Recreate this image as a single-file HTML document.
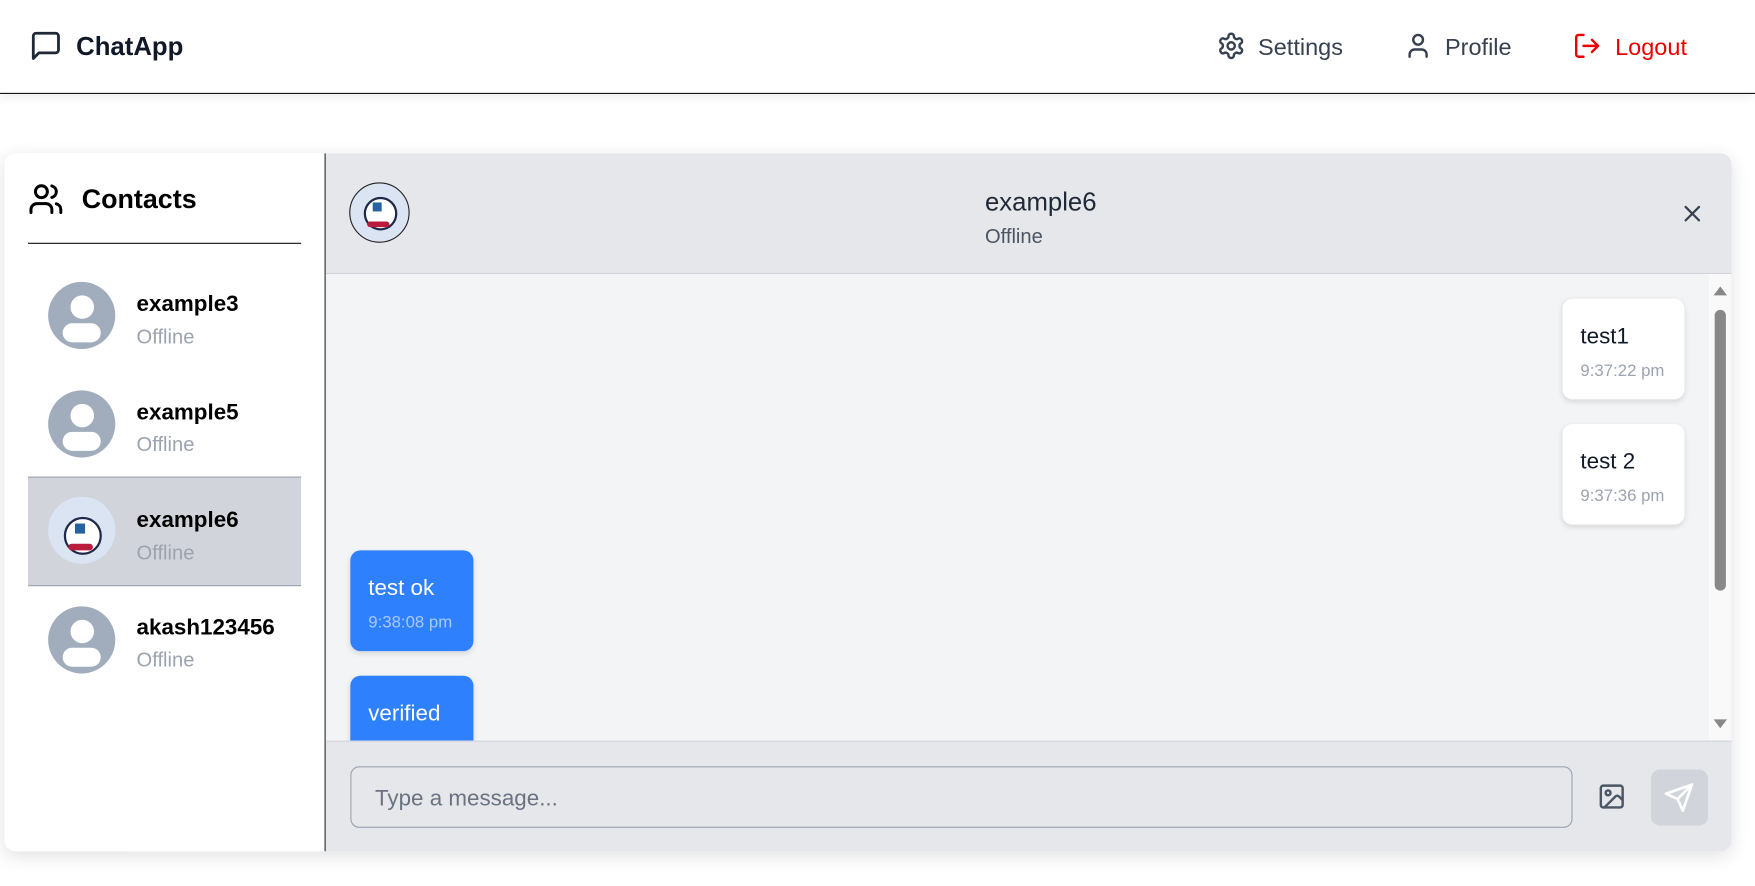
<!DOCTYPE html>
<html><head><meta charset="utf-8"><style>
html,body{margin:0;padding:0;width:1755px;height:886px;overflow:hidden;background:#fff;font-family:"Liberation Sans",sans-serif;}
#w{position:absolute;left:0;top:0;width:1568px;height:792px;transform:scale(1.11926,1.1187);transform-origin:0 0;}
.a{position:absolute;}
.nav{left:0;top:0;width:1568px;height:83px;border-bottom:1px solid #111;background:#fff;box-shadow:0 4px 8px rgba(0,0,0,0.06);}
.navt{font-size:21px;color:#374151;}
.card{left:4px;top:137px;width:1543px;height:624px;border-radius:10px;box-shadow:0 4px 16px rgba(0,0,0,0.12);overflow:hidden;background:#fff;}
.name{font-size:20px;font-weight:bold;color:#000;}
.off{font-size:18px;color:#9ca3af;}
.av{width:60px;height:60px;border-radius:50%;background:#a1adbd;overflow:hidden;}
.bw{background:#fff;border-radius:9px;box-shadow:0 2px 5px rgba(0,0,0,0.12);}
.bb{background:#2f80fc;border-radius:9px;box-shadow:0 2px 5px rgba(0,0,0,0.12);}
</style></head><body><div id="w">
<div class="a nav">
 <svg class="a" style="left:26px;top:26px" width="30" height="30" viewBox="0 0 24 24" fill="none" stroke="#1f2937" stroke-width="2" stroke-linecap="round" stroke-linejoin="round"><path d="M21 15a2 2 0 0 1-2 2H7l-4 4V5a2 2 0 0 1 2-2h14a2 2 0 0 1 2 2z"/></svg>
 <div class="a" style="left:68px;top:28px;font-size:23px;font-weight:bold;color:#111827">ChatApp</div>
 <svg class="a" style="left:1087px;top:28px" width="26" height="26" viewBox="0 0 24 24" fill="none" stroke="#374151" stroke-width="2" stroke-linecap="round" stroke-linejoin="round"><path d="M12.22 2h-.44a2 2 0 0 0-2 2v.18a2 2 0 0 1-1 1.73l-.43.25a2 2 0 0 1-2 0l-.15-.08a2 2 0 0 0-2.730.73l-.22.38a2 2 0 0 0 .73 2.73l.15.1a2 2 0 0 1 1 1.72v.51a2 2 0 0 1-1 1.74l-.15.09a2 2 0 0 0-.73 2.73l.22.38a2 2 0 0 0 2.73.73l.15-.08a2 2 0 0 1 2 0l.43.25a2 2 0 0 1 1 1.73V20a2 2 0 0 0 2 2h.44a2 2 0 0 0 2-2v-.18a2 2 0 0 1 1-1.73l.43-.25a2 2 0 0 1 2 0l.15.08a2 2 0 0 0 2.73-.73l.22-.39a2 2 0 0 0-.73-2.73l-.15-.08a2 2 0 0 1-1-1.74v-.5a2 2 0 0 1 1-1.74l.15-.09a2 2 0 0 0 .73-2.73l-.22-.38a2 2 0 0 0-2.73-.73l-.15.08a2 2 0 0 1-2 0l-.43-.25a2 2 0 0 1-1-1.73V4a2 2 0 0 0-2-2z"/><circle cx="12" cy="12" r="3"/></svg>
 <div class="a navt" style="left:1124px;top:31px">Settings</div>
 <svg class="a" style="left:1254px;top:28px" width="26" height="26" viewBox="0 0 24 24" fill="none" stroke="#374151" stroke-width="2" stroke-linecap="round"><path d="M19 21v-2a4 4 0 0 0-4-4H9a4 4 0 0 0-4 4v2"/><circle cx="12" cy="7" r="4"/></svg>
 <div class="a navt" style="left:1291px;top:31px">Profile</div>
 <svg class="a" style="left:1405px;top:28px" width="26" height="26" viewBox="0 0 24 24" fill="none" stroke="#e00" stroke-width="2" stroke-linecap="round" stroke-linejoin="round"><path d="M9 21H5a2 2 0 0 1-2-2V5a2 2 0 0 1 2-2h4"/><path d="M16 17l5-5-5-5"/><path d="M21 12H9"/></svg>
 <div class="a navt" style="left:1443px;top:31px;color:#e00">Logout</div>
</div>

<div class="a card">
 <div class="a" style="left:0;top:0;width:286px;height:624px;background:#fff;border-right:1px solid #111"></div>
 <svg class="a" style="left:21px;top:25px" width="32" height="32" viewBox="0 0 24 24" fill="none" stroke="#000" stroke-width="2" stroke-linecap="round"><path d="M16 21v-2a4 4 0 0 0-4-4H6a4 4 0 0 0-4 4v2"/><circle cx="9" cy="7" r="4"/><path d="M22 21v-2a4 4 0 0 0-3-3.87"/><path d="M16 3.13a4 4 0 0 1 0 7.75"/></svg>
 <div class="a" style="left:69px;top:28px;font-size:24px;font-weight:bold;color:#000">Contacts</div>
 <div class="a" style="left:21px;top:80px;width:244px;height:1px;background:#111"></div>

 <div class="a" style="left:21px;top:289px;width:244px;height:96px;background:#d1d5db;border-top:1px solid #9ca3af;border-bottom:1px solid #9ca3af"></div>

 <div class="a av" style="left:39px;top:115px"><div class="a" style="left:20px;top:12px;width:21px;height:21px;border-radius:50%;background:#fff"></div><div class="a" style="left:13px;top:37px;width:34px;height:17px;border-radius:9px;background:#fff"></div></div>
 <div class="a name" style="left:118px;top:124px">example3</div><div class="a off" style="left:118px;top:154px">Offline</div>

 <div class="a av" style="left:39px;top:212px"><div class="a" style="left:20px;top:12px;width:21px;height:21px;border-radius:50%;background:#fff"></div><div class="a" style="left:13px;top:37px;width:34px;height:17px;border-radius:9px;background:#fff"></div></div>
 <div class="a name" style="left:118px;top:221px">example5</div><div class="a off" style="left:118px;top:250px">Offline</div>

 <div class="a av" style="left:39px;top:307px;background:#dbe4f3"><div class="a" style="left:14px;top:18px;width:30px;height:30px;border-radius:50%;background:#fff;border:2px solid #1e2a4a"></div><div class="a" style="left:24px;top:24px;width:9px;height:9px;background:#2563a0"></div><div class="a" style="left:18px;top:42px;width:22px;height:6px;background:#b91c3c;border-radius:3px"></div></div>
 <div class="a name" style="left:118px;top:317px">example6</div><div class="a off" style="left:118px;top:347px">Offline</div>

 <div class="a av" style="left:39px;top:405px"><div class="a" style="left:20px;top:12px;width:21px;height:21px;border-radius:50%;background:#fff"></div><div class="a" style="left:13px;top:37px;width:34px;height:17px;border-radius:9px;background:#fff"></div></div>
 <div class="a name" style="left:118px;top:413px">akash123456</div><div class="a off" style="left:118px;top:443px">Offline</div>

 <div class="a" style="left:287px;top:0;width:1256px;height:107px;background:#e5e7eb;border-bottom:1px solid #d1d5db"></div>
 <div class="a" style="left:308px;top:26px;width:52px;height:52px;border-radius:50%;background:#dbe4f3;border:1px solid #222;overflow:hidden"><div class="a" style="left:12px;top:12px;width:26px;height:26px;border-radius:50%;background:#fff;border:2px solid #1e2a4a"></div><div class="a" style="left:20px;top:17px;width:8px;height:8px;background:#2563a0"></div><div class="a" style="left:15px;top:34px;width:20px;height:5px;background:#b91c3c;border-radius:3px"></div></div>
 <div class="a" style="left:876px;top:30px;font-size:23px;color:#1f2937">example6</div>
 <div class="a" style="left:876px;top:64px;font-size:18px;color:#4b5563">Offline</div>
 <svg class="a" style="left:1496px;top:42px" width="24" height="24" viewBox="0 0 24 24" fill="none" stroke="#374151" stroke-width="2" stroke-linecap="round"><path d="M18 6L6 18M6 6l12 12"/></svg>

 <div class="a" style="left:287px;top:108px;width:1236px;height:417px;background:#f3f4f6"></div>
 <div class="a" style="left:1523px;top:108px;width:20px;height:417px;background:#f9f9f9"></div>
 <div class="a" style="left:1527px;top:119px;width:0;height:0;border-left:6px solid transparent;border-right:6px solid transparent;border-bottom:8px solid #888"></div>
 <div class="a" style="left:1528px;top:140px;width:10px;height:251px;border-radius:5px;background:#888"></div>
 <div class="a" style="left:1527px;top:506px;width:0;height:0;border-left:6px solid transparent;border-right:6px solid transparent;border-top:8px solid #888"></div>

 <div class="a bw" style="left:1392px;top:130px;width:109px;height:90px"><div class="a" style="left:16px;top:23px;font-size:20px;color:#111827">test1</div><div class="a" style="left:16px;top:56px;font-size:15px;color:#9ca3af">9:37:22 pm</div></div>
 <div class="a bw" style="left:1392px;top:242px;width:109px;height:90px"><div class="a" style="left:16px;top:23px;font-size:20px;color:#111827">test 2</div><div class="a" style="left:16px;top:56px;font-size:15px;color:#9ca3af">9:37:36 pm</div></div>
 <div class="a bb" style="left:309px;top:355px;width:110px;height:90px"><div class="a" style="left:16px;top:23px;font-size:20px;color:#fff">test ok</div><div class="a" style="left:16px;top:56px;font-size:15px;color:#a9c8fb">9:38:08 pm</div></div>
 <div style="position:absolute;left:287px;top:108px;width:1236px;height:417px;overflow:hidden"><div class="a bb" style="left:22px;top:359px;width:110px;height:90px"><div class="a" style="left:16px;top:23px;font-size:20px;color:#fff">verified</div></div></div>

 <div class="a" style="left:287px;top:525px;width:1256px;height:99px;background:#e5e7eb;border-top:1px solid #d1d5db"></div>
 <div class="a" style="left:309px;top:548px;width:1090px;height:53px;border:1px solid #9ca3af;border-radius:8px;background:#e5e7eb"><div class="a" style="left:21px;top:17px;font-size:20px;color:#6b7280">Type a message...</div></div>
 <svg class="a" style="left:1423px;top:562px" width="26" height="26" viewBox="0 0 24 24" fill="none" stroke="#4b5563" stroke-width="2" stroke-linecap="round" stroke-linejoin="round"><rect x="3" y="3" width="18" height="18" rx="2"/><circle cx="9" cy="9" r="2"/><path d="M21 15l-3.1-3.1a2 2 0 0 0-2.8 0L6 21"/></svg>
 <div class="a" style="left:1471px;top:551px;width:51px;height:50px;border-radius:8px;background:#d1d5db"></div>
 <svg class="a" style="left:1482px;top:562px" width="28" height="28" viewBox="0 0 24 24" fill="none" stroke="#fff" stroke-width="2" stroke-linecap="round" stroke-linejoin="round"><path d="M22 2L11 13"/><path d="M22 2l-7 20-4-9-9-4z"/></svg>
</div>
</div></body></html>
